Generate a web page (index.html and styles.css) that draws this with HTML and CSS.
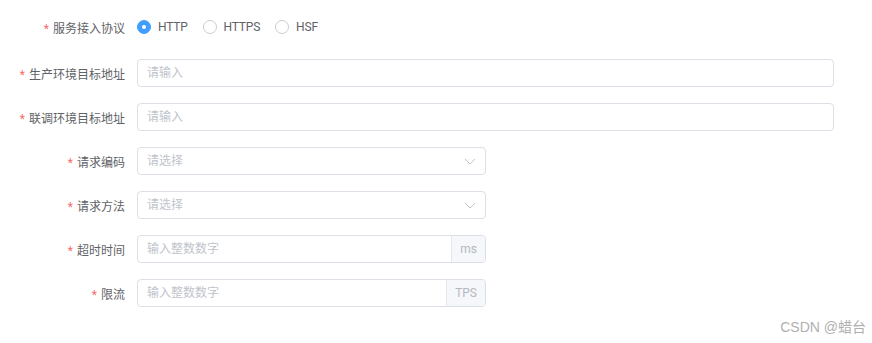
FILE: index.html
```html
<!DOCTYPE html>
<html lang="zh-CN">
<head>
    <meta charset="utf-8">
    <title>服务配置</title>
    <link rel="stylesheet" href="styles.css">
</head>
<body>
    <form class="form">
        <div class="row row-radio">
            <label class="label"><span class="req">*</span>服务接入协议</label>
            <div class="radios">
                <span class="radio checked"><i class="dot"></i>HTTP</span>
                <span class="radio"><i class="dot"></i>HTTPS</span>
                <span class="radio"><i class="dot"></i>HSF</span>
            </div>
        </div>
        <div class="row">
            <label class="label"><span class="req">*</span>生产环境目标地址</label>
            <div class="field wide"><input type="text" placeholder="请输入"></div>
        </div>
        <div class="row">
            <label class="label"><span class="req">*</span>联调环境目标地址</label>
            <div class="field wide"><input type="text" placeholder="请输入"></div>
        </div>
        <div class="row">
            <label class="label"><span class="req">*</span>请求编码</label>
            <div class="field narrow select">
                <input type="text" placeholder="请选择" readonly>
                <svg class="arrow" width="12" height="7" viewBox="0 0 12 7"><path d="M1 1 L6 6 L11 1" fill="none" stroke="#c0c4cc" stroke-width="1"/></svg>
            </div>
        </div>
        <div class="row">
            <label class="label"><span class="req">*</span>请求方法</label>
            <div class="field narrow select">
                <input type="text" placeholder="请选择" readonly>
                <svg class="arrow" width="12" height="7" viewBox="0 0 12 7"><path d="M1 1 L6 6 L11 1" fill="none" stroke="#c0c4cc" stroke-width="1"/></svg>
            </div>
        </div>
        <div class="row">
            <label class="label"><span class="req">*</span>超时时间</label>
            <div class="field narrow group">
                <input type="text" placeholder="输入整数数字">
                <span class="append">ms</span>
            </div>
        </div>
        <div class="row">
            <label class="label"><span class="req">*</span>限流</label>
            <div class="field narrow group">
                <input type="text" placeholder="输入整数数字">
                <span class="append">TPS</span>
            </div>
        </div>
    </form>
    <div class="watermark">CSDN @蜡台</div>
</body>
</html>
```

FILE: styles.css
```css
body {
    margin: 0;
    background: #fff;
    font-family: Roboto, "Noto Sans CJK SC", sans-serif;
    font-size: 12px;
    color: #606266;
}

.form {
    padding-top: 11px;
}

.row {
    display: flex;
    align-items: center;
    height: 28px;
    margin-bottom: 16px;
}
.row-radio {
    height: 32px;
}

.label {
    width: 137px;
    box-sizing: border-box;
    padding-right: 12px;
    text-align: right;
    color: #606266;
    font-size: 12px;
}
.req {
    color: #f56c6c;
    margin-right: 4px;
}

.radios {
    display: flex;
    align-items: center;
}
.radio {
    display: flex;
    align-items: center;
    margin-right: 15px;
    color: #606266;
    font-size: 12px;
    letter-spacing: -0.2px;
}
.radio .dot {
    width: 14px;
    height: 14px;
    box-sizing: border-box;
    border: 1px solid #c9ccd2;
    border-radius: 50%;
    margin-right: 7px;
    background: #fff;
    position: relative;
}
.radio.checked .dot {
    background: #409eff;
    border-color: #409eff;
}
.radio.checked .dot::after {
    content: "";
    position: absolute;
    left: 4px;
    top: 4px;
    width: 4px;
    height: 4px;
    border-radius: 50%;
    background: #fff;
}

.field {
    display: flex;
    height: 28px;
    box-sizing: border-box;
    border: 1px solid #dcdfe6;
    border-radius: 4px;
    background: #fff;
    overflow: hidden;
}
.wide {
    width: 697px;
}
.narrow {
    width: 349px;
}
.field input {
    flex: 1;
    min-width: 0;
    border: 0;
    outline: 0;
    padding: 0 9px;
    font-family: inherit;
    font-size: 12px;
    color: #606266;
    background: transparent;
}
.field input::placeholder {
    color: #c0c4cc;
}

.select {
    align-items: center;
}
.arrow {
    margin-right: 9px;
}

.append {
    display: flex;
    align-items: center;
    padding: 0 8px;
    background: #f5f7fa;
    border-left: 1px solid #e4e7ed;
    color: #b4b8bf;
    font-size: 12px;
}

.watermark {
    position: absolute;
    right: 6px;
    bottom: 7px;
    font-family: "Liberation Sans", "Noto Sans CJK SC", sans-serif;
    font-size: 14px;
    color: #b0b0b0;
}
```
